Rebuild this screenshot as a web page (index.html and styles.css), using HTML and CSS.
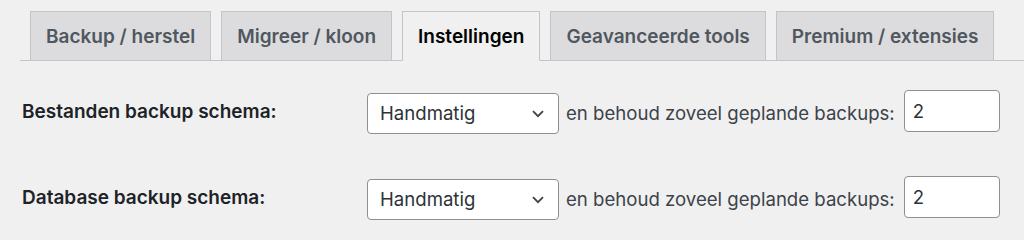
FILE: index.html
```html
<!DOCTYPE html>
<html lang="nl">
<head>
<meta charset="utf-8">
<link rel="stylesheet" href="styles.css">
</head>
<body>
<nav class="tabs">
  <a class="tab">Backup / herstel</a>
  <a class="tab">Migreer / kloon</a>
  <a class="tab active">Instellingen</a>
  <a class="tab">Geavanceerde tools</a>
  <a class="tab">Premium / extensies</a>
</nav>
<div class="form">
  <div class="row">
    <div class="label">Bestanden backup schema:</div>
    <div class="controls">
      <div class="select"><span>Handmatig</span><svg width="12" height="8" viewBox="0 0 12 8"><path d="M1 1.2 L6 6.2 L11 1.2" fill="none" stroke="#3c434a" stroke-width="1.8"/></svg></div>
      <span class="text">en behoud zoveel geplande backups:</span>
      <div class="input">2</div>
    </div>
  </div>
  <div class="row">
    <div class="label">Database backup schema:</div>
    <div class="controls">
      <div class="select"><span>Handmatig</span><svg width="12" height="8" viewBox="0 0 12 8"><path d="M1 1.2 L6 6.2 L11 1.2" fill="none" stroke="#3c434a" stroke-width="1.8"/></svg></div>
      <span class="text">en behoud zoveel geplande backups:</span>
      <div class="input">2</div>
    </div>
  </div>
</div>
</body>
</html>
```
FILE: styles.css
```css
html, body {
  margin: 0;
  padding: 0;
  background: #f0f0f1;
  font-family: Inter, "Liberation Sans", sans-serif;
  -webkit-font-smoothing: antialiased;
}
.tabs {
  display: flex;
  align-items: flex-end;
  gap: 10px;
  margin: 11px 0 0 20px;
  padding-left: 10px;
  border-bottom: 1px solid #c3c4c7;
  height: 49px;
}
.tab {
  box-sizing: border-box;
  height: 50px;
  margin-bottom: -1px;
  display: flex;
  align-items: center;
  padding: 1px 15px 0;
  background: #dcdcde;
  border: 1px solid #c3c4c7;
  color: #50575e;
  font-size: 19px;
  font-weight: 600;
  white-space: nowrap;
}
.tab.active {
  background: #f0f0f1;
  border-bottom-color: #f0f0f1;
  color: #000;
}
.form {
  padding: 9px 0 0 22px;
}
.row {
  display: grid;
  grid-template-columns: 345px auto;
  align-items: center;
  height: 86px;
}
.label {
  font-size: 19px;
  font-weight: 600;
  color: #1d2327;
  margin-bottom: 4px;
}
.controls {
  display: flex;
  align-items: center;
}
.select {
  box-sizing: border-box;
  width: 192px;
  height: 41px;
  display: flex;
  align-items: center;
  justify-content: space-between;
  padding: 0 14px 0 12px;
  background: #fff;
  border: 1px solid #8c8f94;
  border-radius: 4px;
  font-size: 18.6px;
  color: #2c3338;
}
.select svg {
  margin-top: 1px;
}
.text {
  margin-left: 7px;
  font-size: 18.6px;
  color: #3c434a;
}
.input {
  box-sizing: border-box;
  width: 96px;
  height: 42px;
  margin-left: 9px;
  margin-bottom: 4px;
  display: flex;
  align-items: center;
  padding-left: 8px;
  background: #fff;
  border: 1px solid #8c8f94;
  border-radius: 4px;
  font-size: 18.6px;
  color: #2c3338;
}
```
